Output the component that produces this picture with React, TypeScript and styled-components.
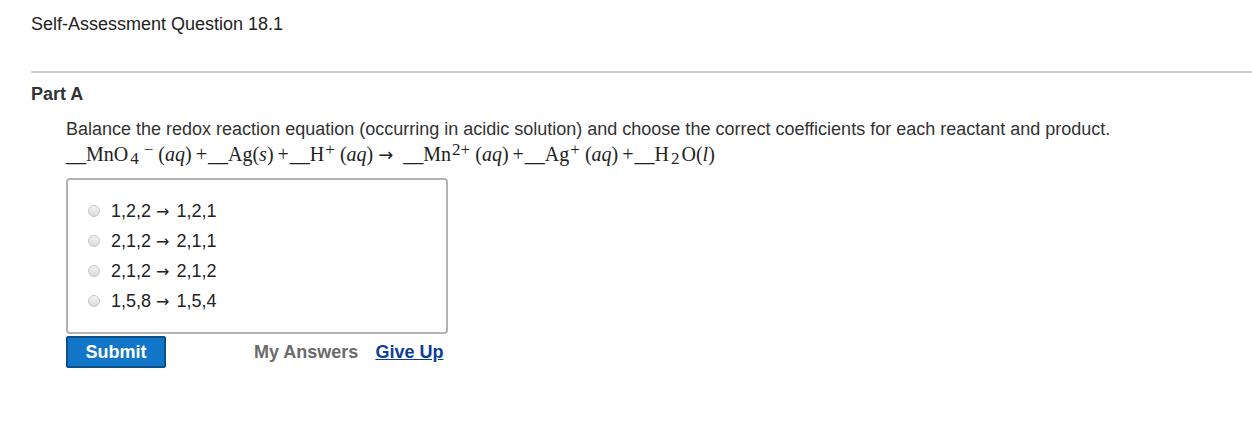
import React from "react";
import styled, { createGlobalStyle } from "styled-components";

const Global = createGlobalStyle`
  html, body { margin: 0; padding: 0; background: #fff; }
  body { font-family: "Liberation Sans", Arial, sans-serif; color: #222; }
`;

const Page = styled.div`
  width: 1252px;
  height: 432px;
  padding: 14px 0 0 31px;
  box-sizing: border-box;
  overflow: hidden;
`;

const Title = styled.h1`
  margin: 0;
  font-size: 18px;
  font-weight: normal;
  line-height: 20px;
  color: #222;
`;

const Rule = styled.hr`
  margin: 37px 0 0 0;
  border: none;
  border-top: 2px solid #cccccc;
  height: 0;
`;

const PartTitle = styled.h2`
  margin: 11px 0 0 0;
  font-size: 18px;
  font-weight: bold;
  line-height: 20px;
  color: #333;
`;

const Body = styled.div`
  padding: 15px 0 0 35px;
`;

const Prompt = styled.p`
  margin: 0;
  font-size: 18px;
  line-height: 20px;
  color: #333;
`;

const Equation = styled.div`
  font-family: "Liberation Serif", "Times New Roman", serif;
  font-size: 20px;
  line-height: 24px;
  height: 24px;
  color: #222;
  margin-top: 3px;
  white-space: nowrap;
  display: flex;
  align-items: baseline;
`;

const Term = styled.span`
  display: inline-flex;
  align-items: baseline;
`;

const Italic = styled.i`
  font-style: italic;
`;

const Sup = styled.span<{ $gap?: number }>`
  font-size: 17px;
  line-height: 17px;
  position: relative;
  top: -6px;
  margin-left: ${(p) => p.$gap ?? 1}px;
  margin-right: 5px;
`;

const Sub = styled.span`
  font-size: 17px;
  position: relative;
  top: 3px;
  margin-left: 2px;
`;

const Plus = styled.span`
  margin: 0 1px 0 4px;
`;

const Arrow = styled.span`
  font-family: "DejaVu Sans", sans-serif;
  font-size: 18px;
  margin: 0 10px 0 5px;
`;

const OptionsBox = styled.div`
  margin-top: 12px;
  width: 382px;
  height: 156px;
  box-sizing: border-box;
  border: 2px solid #b3b3b3;
  border-radius: 4px;
  padding: 21px 0 0 20px;
  display: flex;
  flex-direction: column;
  gap: 10px;
`;

const OptionRow = styled.label`
  display: flex;
  align-items: center;
  gap: 11px;
  height: 20px;
  font-size: 18px;
  color: #222;
`;

const OptArrow = styled.span`
  font-family: "DejaVu Sans", sans-serif;
  font-size: 16px;
  margin: 0 7px 0 5px;
`;

const Radio = styled.span`
  width: 12px;
  height: 12px;
  border-radius: 50%;
  border: 1px solid #c6c6c6;
  background: linear-gradient(#f4f4f4, #dadada);
  box-sizing: border-box;
  flex-shrink: 0;
`;

const Actions = styled.div`
  display: flex;
  align-items: center;
  margin-top: 2px;
`;

const SubmitButton = styled.button`
  width: 100px;
  height: 32px;
  background: #1176c8;
  border: 2px solid #0d4f85;
  border-radius: 2px;
  color: #fff;
  font-family: "Liberation Sans", Arial, sans-serif;
  font-weight: bold;
  font-size: 18px;
  padding: 0;
`;

const MutedLink = styled.span`
  margin-left: 88px;
  font-weight: bold;
  font-size: 18px;
  color: #6b6b6b;
`;

const GiveUp = styled.a`
  margin-left: 17px;
  font-weight: bold;
  font-size: 18px;
  color: #0b3d9a;
  text-decoration: underline;
`;

const OSpacer = styled.span`
  margin-left: 2px;
`;

const options: [string, string][] = [
  ["1,2,2", "1,2,1"],
  ["2,1,2", "2,1,1"],
  ["2,1,2", "2,1,2"],
  ["1,5,8", "1,5,4"],
];

const Phase = ({ p }: { p: string }) => (
  <span>
    (<Italic>{p}</Italic>)
  </span>
);

export default function App() {
  return (
    <>
      <Global />
      <Page>
        <Title>Self-Assessment Question 18.1</Title>
        <Rule />
        <PartTitle>Part A</PartTitle>
        <Body>
          <Prompt>
            Balance the redox reaction equation (occurring in acidic solution) and choose the correct coefficients for each reactant and product.
          </Prompt>
          <Equation>
            <Term>
              __MnO<Sub>4</Sub>
              <Sup $gap={5}>−</Sup>
              <Phase p="aq" />
            </Term>
            <Plus>+</Plus>
            <Term>
              __Ag<Phase p="s" />
            </Term>
            <Plus>+</Plus>
            <Term>
              __H<Sup>+</Sup>
              <Phase p="aq" />
            </Term>
            <Arrow>→</Arrow>
            <Term>
              __Mn<Sup>2+</Sup>
              <Phase p="aq" />
            </Term>
            <Plus>+</Plus>
            <Term>
              __Ag<Sup>+</Sup>
              <Phase p="aq" />
            </Term>
            <Plus>+</Plus>
            <Term>
              __H<Sub>2</Sub>
              <OSpacer>O</OSpacer>
              <Phase p="l" />
            </Term>
          </Equation>
          <OptionsBox>
            {options.map(([a, b], i) => (
              <OptionRow key={i}>
                <Radio />
                <span>
                  {a}
                  <OptArrow>→</OptArrow>
                  {b}
                </span>
              </OptionRow>
            ))}
          </OptionsBox>
          <Actions>
            <SubmitButton>Submit</SubmitButton>
            <MutedLink>My Answers</MutedLink>
            <GiveUp href="#">Give Up</GiveUp>
          </Actions>
        </Body>
      </Page>
    </>
  );
}
